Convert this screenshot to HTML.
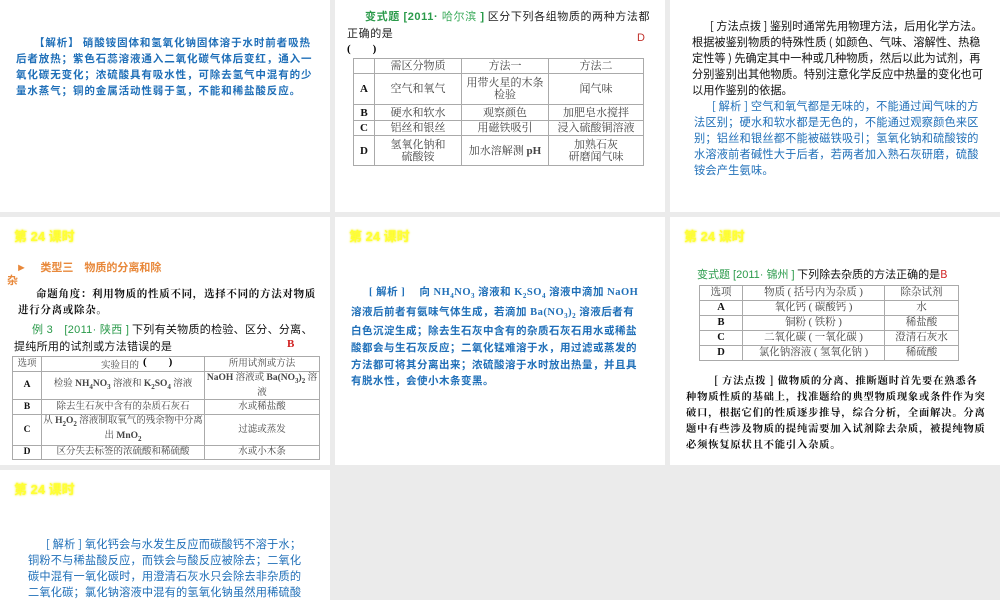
<!DOCTYPE html>
<html><head><meta charset="utf-8"><style>
*{margin:0;padding:0;box-sizing:border-box}
body{width:1000px;height:600px;background:#ebebeb;position:relative;overflow:hidden;font-family:"Liberation Serif","Noto Serif CJK SC","Noto Sans CJK SC",serif;font-size:11px}
.s{position:absolute;background:#fff;overflow:hidden}
.a{position:absolute}
.blue{color:#1f6fb8}
.t{position:absolute;font-family:"Liberation Sans","Noto Sans CJK SC",sans-serif;font-weight:bold;color:#ffff33;font-size:13px;text-shadow:0 0 2px #f4f000}
.g{color:#2a9a4a;font-family:"Liberation Sans","Noto Sans CJK SC",sans-serif;font-weight:bold}
p{line-height:16px;white-space:nowrap}
table{position:absolute;border-collapse:collapse;font-size:10.5px;color:#444}
td{border:1px solid #aaa;text-align:center;line-height:12px;padding:0}
td.b{font-weight:bold;color:#111}
sub{font-size:7px}
</style></head><body>

<div class="s" style="left:0;top:0;width:330px;height:212px">
<p class="a blue" style="left:16px;top:35px;text-indent:18px;font-weight:bold;font-family:'Noto Sans CJK SC',sans-serif;font-size:10.5px;letter-spacing:0.9px">【解析】 硝酸铵固体和氢氧化钠固体溶于水时前者吸热<br>后者放热；紫色石蕊溶液通入二氧化碳气体后变红，通入一<br>氧化碳无变化；浓硫酸具有吸水性，可除去氢气中混有的少<br>量水蒸气；铜的金属活动性弱于氢，不能和稀盐酸反应。</p>
</div>

<div class="s" style="left:335px;top:0;width:330px;height:212px">
<p class="a" style="left:12px;top:8px;text-indent:18px;font-family:'Noto Sans CJK SC',sans-serif;color:#222;letter-spacing:0.6px"><span class="g">变式题 [2011· <span style="font-weight:normal;color:#3aaa5a">哈尔滨</span> ]</span> 区分下列各组物质的两种方法都<br>正确的是</p>
<div class="a" style="left:12px;top:40px;font-weight:bold">(　　)</div>
<div class="a" style="left:302px;top:32px;color:#c0302a;font-family:'Liberation Sans',sans-serif;font-size:11px">D</div>
<table style="left:18px;top:58px;width:291px;font-size:11px">
<tr style="height:15px"><td style="width:21px"></td><td style="width:87px">需区分物质</td><td style="width:87px">方法一</td><td>方法二</td></tr>
<tr style="height:31px"><td class="b">A</td><td>空气和氧气</td><td>用带火星的木条<br>检验</td><td>闻气味</td></tr>
<tr style="height:16px"><td class="b">B</td><td>硬水和软水</td><td>观察颜色</td><td>加肥皂水搅拌</td></tr>
<tr style="height:15px"><td class="b">C</td><td>铝丝和银丝</td><td>用磁铁吸引</td><td>浸入硫酸铜溶液</td></tr>
<tr style="height:30px"><td class="b">D</td><td>氢氧化钠和<br>硫酸铵</td><td>加水溶解测 <b>pH</b></td><td>加熟石灰<br>研磨闻气味</td></tr>
</table>
</div>

<div class="s" style="left:670px;top:0;width:330px;height:212px;font-family:'Noto Sans CJK SC',sans-serif">
<p class="a" style="left:22px;top:18px;text-indent:18px;color:#111;font-size:11.2px;letter-spacing:0px">[ 方法点拨 ] 鉴别时通常先用物理方法，后用化学方法。<br>根据被鉴别物质的特殊性质 ( 如颜色、气味、溶解性、热稳<br>定性等 ) 先确定其中一种或几种物质，然后以此为试剂，再<br>分别鉴别出其他物质。特别注意化学反应中热量的变化也可<br>以用作鉴别的依据。</p>
<p class="a blue" style="left:24px;top:98px;text-indent:18px;font-size:11.2px;letter-spacing:0.2px">[ 解析 ] 空气和氧气都是无味的，不能通过闻气味的方<br>法区别；硬水和软水都是无色的，不能通过观察颜色来区<br>别；铝丝和银丝都不能被磁铁吸引；氢氧化钠和硫酸铵的<br>水溶液前者碱性大于后者，若两者加入熟石灰研磨，硫酸<br>铵会产生氨味。</p>
</div>

<div class="s" style="left:0;top:217px;width:330px;height:248px">
<div class="t" style="left:14px;top:9px">第 24 课时</div>
<div class="a" style="left:16px;top:42px;color:#e8883a;font-family:'Noto Sans CJK SC',sans-serif;font-weight:bold;font-size:11px">►　 类型三　物质的分离和除</div>
<div class="a" style="left:7px;top:55px;color:#e8883a;font-family:'Noto Sans CJK SC',sans-serif;font-weight:bold;font-size:11px">杂</div>
<p class="a" style="left:18px;top:69px;text-indent:18px;font-weight:bold;color:#111;font-family:'Noto Serif CJK SC',serif;font-size:10.5px;letter-spacing:0.7px">命题角度：利用物质的性质不同，选择不同的方法对物质<br>进行分离或除杂。</p>
<p class="a" style="left:14px;top:104px;text-indent:18px;color:#111;font-family:'Noto Sans CJK SC',sans-serif;font-size:11px;letter-spacing:0.3px"><span class="g" style="font-weight:normal">例 3　[2011· 陕西 ]</span> 下列有关物质的检验、区分、分离、<br>提纯所用的试剂或方法错误的是</p>
<div class="a" style="left:287px;top:121px;color:#d02020;font-weight:bold">B</div>
<div class="a" style="left:143px;top:136px;font-weight:bold">(　　)</div>
<table style="left:12px;top:139px;width:308px;font-size:9.5px">
<tr style="height:15px"><td style="width:29px">选项</td><td style="width:163px"></td><td>所用试剂或方法</td></tr>
<tr style="height:22px"><td class="b">A</td><td>检验 <b>NH<sub>4</sub>NO<sub>3</sub></b> 溶液和 <b>K<sub>2</sub>SO<sub>4</sub></b> 溶液</td><td><b>NaOH</b> 溶液或 <b>Ba(NO<sub>3</sub>)<sub>2</sub></b> 溶液</td></tr>
<tr style="height:15px"><td class="b">B</td><td>除去生石灰中含有的杂质石灰石</td><td>水或稀盐酸</td></tr>
<tr style="height:26px"><td class="b">C</td><td>从 <b>H<sub>2</sub>O<sub>2</sub></b> 溶液制取氧气的残余物中分离出 <b>MnO<sub>2</sub></b></td><td>过滤或蒸发</td></tr>
<tr style="height:14px"><td class="b">D</td><td>区分失去标签的浓硫酸和稀硫酸</td><td>水或小木条</td></tr>
</table>
<div class="a" style="left:101px;top:140px;font-size:9.5px;color:#444">实验目的</div>
</div>

<div class="s" style="left:335px;top:217px;width:330px;height:248px">
<div class="t" style="left:14px;top:9px">第 24 课时</div>
<p class="a blue" style="left:16px;top:68px;text-indent:18px;font-weight:bold;font-size:10.5px;font-family:'Liberation Serif','Noto Sans CJK SC',sans-serif;line-height:16.6px;letter-spacing:0.5px">[ 解析 ]　 向 NH<sub>4</sub>NO<sub>3</sub> 溶液和 K<sub>2</sub>SO<sub>4</sub> 溶液中滴加 NaOH<br>溶液后前者有氨味气体生成，若滴加 Ba(NO<sub>3</sub>)<sub>2</sub> 溶液后者有<br>白色沉淀生成；除去生石灰中含有的杂质石灰石用水或稀盐<br>酸都会与生石灰反应；二氧化锰难溶于水，用过滤或蒸发的<br>方法都可将其分离出来；浓硫酸溶于水时放出热量，并且具<br>有脱水性，会使小木条变黑。</p>
</div>

<div class="s" style="left:670px;top:217px;width:330px;height:248px">
<div class="t" style="left:14px;top:9px">第 24 课时</div>
<div class="a" style="left:27px;top:49px;font-family:'Noto Sans CJK SC',sans-serif;color:#111;font-size:11px"><span class="g" style="font-weight:normal">变式题 [2011· 锦州 ]</span> 下列除去杂质的方法正确的是<span style="color:#d02020">B</span></div>
<table style="left:29px;top:68px;width:260px;font-size:10.5px">
<tr style="height:15px"><td style="width:43px">选项</td><td style="width:142px">物质 ( 括号内为杂质 )</td><td>除杂试剂</td></tr>
<tr style="height:15px"><td class="b">A</td><td>氧化钙 ( 碳酸钙 )</td><td>水</td></tr>
<tr style="height:15px"><td class="b">B</td><td>铜粉 ( 铁粉 )</td><td>稀盐酸</td></tr>
<tr style="height:15px"><td class="b">C</td><td>二氧化碳 ( 一氧化碳 )</td><td>澄清石灰水</td></tr>
<tr style="height:15px"><td class="b">D</td><td>氯化钠溶液 ( 氢氧化钠 )</td><td>稀硫酸</td></tr>
</table>
<p class="a" style="left:16px;top:155px;text-indent:28px;color:#111;font-weight:bold;font-family:'Noto Serif CJK SC',serif;font-size:10.3px;line-height:16px;letter-spacing:0.8px">[ 方法点拨 ] 做物质的分离、推断题时首先要在熟悉各<br>种物质性质的基础上，找准题给的典型物质现象或条件作为突<br>破口，根据它们的性质逐步推导，综合分析，全面解决。分离<br>题中有些涉及物质的提纯需要加入试剂除去杂质，被提纯物质<br>必须恢复原状且不能引入杂质。</p>
</div>

<div class="s" style="left:0;top:470px;width:330px;height:130px">
<div class="t" style="left:14px;top:9px">第 24 课时</div>
<p class="a blue" style="left:28px;top:66px;text-indent:18px;font-family:'Noto Sans CJK SC',sans-serif;font-size:11.2px;letter-spacing:0.2px">[ 解析 ] 氧化钙会与水发生反应而碳酸钙不溶于水；<br>铜粉不与稀盐酸反应，而铁会与酸反应被除去；二氧化<br>碳中混有一氧化碳时，用澄清石灰水只会除去非杂质的<br>二氧化碳；氯化钠溶液中混有的氢氧化钠虽然用稀硫酸</p>
</div>

</body></html>
